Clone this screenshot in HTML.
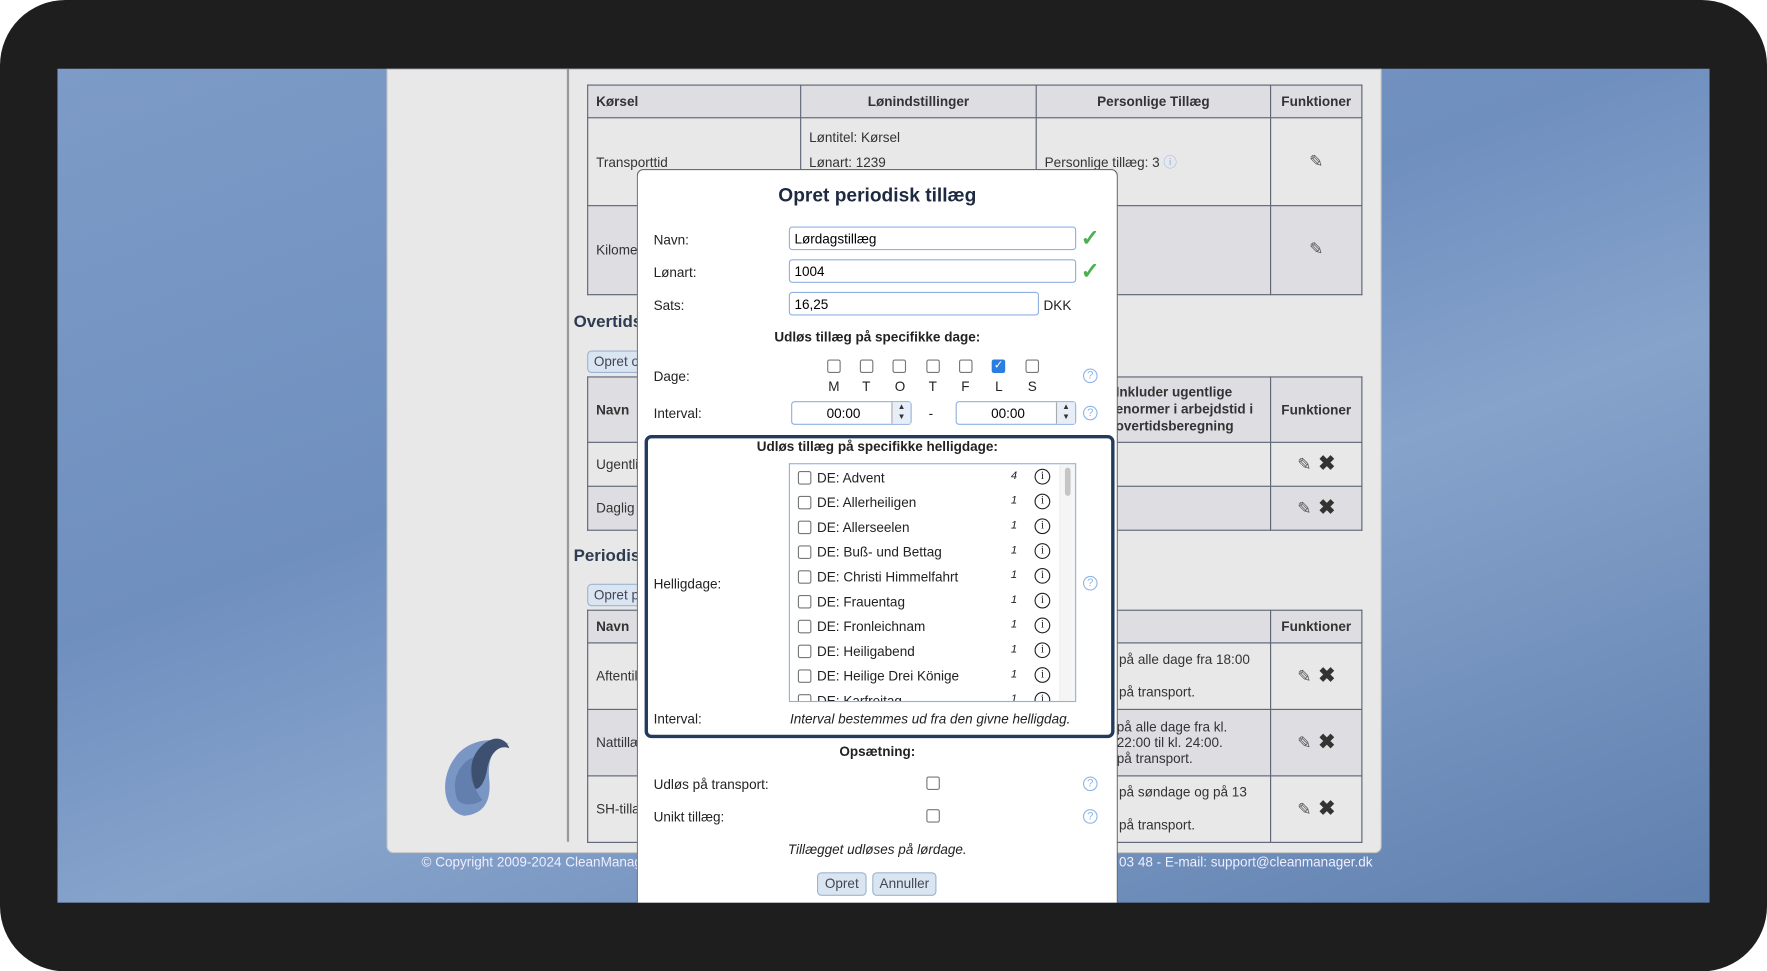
<!DOCTYPE html>
<html><head><meta charset="utf-8"><style>
*{box-sizing:border-box;margin:0;padding:0}
html,body{width:1767px;height:971px;overflow:hidden;background:#fff;font-family:"Liberation Sans",sans-serif}
#w{position:absolute;left:0;top:0;width:1568px;height:862px;transform:scale(1.12692);transform-origin:0 0}
.a{position:absolute}
#frame{left:0;top:0;width:1568px;height:862px;background:#1e1e1e;border-radius:58px}
#desk{left:51px;top:61px;width:1466px;height:740px;background:linear-gradient(160deg,#7d9bc6 0%,#6f8fbf 40%,#86a3cb 60%,#5f7fae 100%)}
#page{left:343px;top:61px;width:883px;height:696px;background:#e8e8e8;border-radius:0 0 6px 6px;border:1px solid #c8c8c8}
#vline{left:503px;top:61px;width:2px;height:686px;background:#999}
table{border-collapse:collapse;position:absolute;font-size:12px;color:#333;table-layout:fixed}
td,th{border:1px solid #5a6274;padding:0 7px;line-height:14px;overflow:hidden}
th{background:#dedee2;font-weight:bold}
td{background:#e8e8e8}
tr.alt td{background:#dedee2}
h3{position:absolute;font-size:15px;color:#2e3b50;font-weight:bold}
.btn{position:absolute;height:20px;border:1px solid #9eb4d2;background:#dae5f2;border-radius:4px;font-size:12px;color:#445;padding:2px 5px;overflow:hidden;white-space:nowrap}
.f{font-size:12px;color:#eef;position:absolute;top:758px}
#modal{left:565px;top:150px;width:427px;height:651px;background:#fff;border-radius:6px 6px 0 0;border:1px solid #666;border-bottom:none}
.m{position:absolute;font-size:12px;color:#222}
.in{position:absolute;height:21px;border:1px solid #8fb0e0;border-radius:3px;font-size:12px;padding:3px 4px;background:#fff}
.chk{position:absolute;width:12px;height:12px;border:1px solid #777;border-radius:2px;background:#fff}
.q{position:absolute;width:13px;height:13px;border:1.3px solid #8fb5e8;border-radius:50%;color:#8fb5e8;font-size:10px;text-align:center;line-height:11px}
.ok{position:absolute;color:#4caf50;font-size:20px;font-weight:bold}
.ii{position:absolute;width:14px;height:14px;border:1.3px solid #222;border-radius:50%;font-size:10px;text-align:center;line-height:12px;font-family:"Liberation Serif",serif;color:#222}
.hl{position:absolute;left:0;font-size:12px;color:#222;height:22px;width:255px}
.pen{display:inline-block;font-size:15px;color:#555}
.x{display:inline-block;font-size:18px;font-weight:bold;color:#333;margin-left:6px}
</style></head><body><div id="w">
<div id="frame" class="a"></div>
<div id="desk" class="a"></div>
<div id="page" class="a"></div>
<div id="vline" class="a"></div>
<svg class="a" style="left:392px;top:650px" width="62" height="74" viewBox="0 0 62 74">
<path d="M20 74 C0 70 -2 40 12 22 C20 10 40 2 60 10 C50 8 40 20 42 40 C44 58 40 72 20 74Z" fill="#7a96c4"/>
<path d="M30 50 C20 35 28 12 45 6 C52 4 58 8 60 14 C50 10 42 20 40 34 C38 44 34 50 30 50Z" fill="#3d5070"/>
<path d="M14 60 C8 44 14 28 28 22 C24 36 28 50 36 60 C30 64 20 66 14 60Z" fill="#5c79a8" opacity=".8"/>
</svg>

<table style="left:521px;top:75px;width:688px">
<tr style="height:29px"><th style="width:189px;text-align:left">Kørsel</th><th style="width:209px">Lønindstillinger</th><th style="width:208px">Personlige Tillæg</th><th>Funktioner</th></tr>
<tr style="height:78px"><td>Transporttid</td><td style="line-height:22px;vertical-align:top;padding-top:6px">Løntitel: Kørsel<br>Lønart: 1239</td><td>Personlige tillæg: 3 <span style="color:#8fb5e8">ⓘ</span></td><td style="text-align:center"><span class="pen">✎</span></td></tr>
<tr class="alt" style="height:79px"><td>Kilometer</td><td></td><td><i>Ikke pålagt</i></td><td style="text-align:center"><span class="pen">✎</span></td></tr>
</table>
<h3 style="left:509px;top:277px">Overtidsregler</h3>
<div class="btn" style="left:521px;top:311px;width:60px">Opret overtid</div>
<table style="left:521px;top:334px;width:688px">
<tr style="height:58px"><th style="width:465px;text-align:left">Navn</th><th style="width:141px;text-align:left;line-height:15px;padding-left:3px">Inkluder ugentlige<br>enormer i arbejdstid i<br>overtidsberegning</th><th>Funktioner</th></tr>
<tr style="height:39px"><td>Ugentlig</td><td></td><td style="text-align:center"><span class="pen">✎</span><span class="x">✖</span></td></tr>
<tr class="alt" style="height:39px"><td>Daglig</td><td></td><td style="text-align:center"><span class="pen">✎</span><span class="x">✖</span></td></tr>
</table>
<h3 style="left:509px;top:485px">Periodiske tillæg</h3>
<div class="btn" style="left:521px;top:518px;width:60px">Opret periodisk</div>
<table style="left:521px;top:541px;width:688px">
<tr style="height:29px"><th style="width:465px;text-align:left">Navn</th><th style="width:141px"></th><th>Funktioner</th></tr>
<tr style="height:59px"><td>Aftentillæg</td><td style="line-height:29px;padding-left:6px">på alle dage fra 18:00<br>på transport.</td><td style="text-align:center"><span class="pen">✎</span><span class="x">✖</span></td></tr>
<tr class="alt" style="height:59px"><td>Nattillæg</td><td style="line-height:14px;padding-left:4px">på alle dage fra kl.<br>22:00 til kl. 24:00.<br>på transport.</td><td style="text-align:center"><span class="pen">✎</span><span class="x">✖</span></td></tr>
<tr style="height:59px"><td>SH-tillæg</td><td style="line-height:29px;padding-left:6px">på søndage og på 13<br>på transport.</td><td style="text-align:center"><span class="pen">✎</span><span class="x">✖</span></td></tr>
</table>
<div class="f" style="left:374px">© Copyright 2009-2024 CleanManager ApS</div>
<div class="f" style="left:993px">03 48 - E-mail: support@cleanmanager.dk</div>

<div id="modal" class="a"></div>
<div class="m" style="left:565px;width:427px;top:164px;text-align:center;font-size:17px;font-weight:bold;color:#1d2a40">Opret periodisk tillæg</div>
<div class="m" style="left:580px;top:206px">Navn:</div>
<div class="in" style="left:700px;top:201px;width:255px">Lørdagstillæg</div><div class="ok" style="left:959px;top:199px">✓</div>
<div class="m" style="left:580px;top:235px">Lønart:</div>
<div class="in" style="left:700px;top:230px;width:255px">1004</div><div class="ok" style="left:959px;top:228px">✓</div>
<div class="m" style="left:580px;top:264px">Sats:</div>
<div class="in" style="left:700px;top:259px;width:222px">16,25</div><div class="m" style="left:926px;top:264px">DKK</div>
<div class="m" style="left:565px;width:427px;text-align:center;top:292px;font-weight:bold">Udløs tillæg på specifikke dage:</div>
<div class="m" style="left:580px;top:327px">Dage:</div>
<div class="chk" style="left:734px;top:319px"></div><div class="chk" style="left:763px;top:319px"></div><div class="chk" style="left:792px;top:319px"></div><div class="chk" style="left:822px;top:319px"></div><div class="chk" style="left:851px;top:319px"></div>
<div class="chk" style="left:880px;top:319px;background:#2a7de1;border-color:#2a7de1;color:#fff;font-size:10px;line-height:10px;text-align:center">✓</div><div class="chk" style="left:910px;top:319px"></div>
<div class="m" style="left:735px;top:336px">M</div><div class="m" style="left:765px;top:336px">T</div><div class="m" style="left:794px;top:336px">O</div><div class="m" style="left:824px;top:336px">T</div><div class="m" style="left:853px;top:336px">F</div><div class="m" style="left:883px;top:336px">L</div><div class="m" style="left:912px;top:336px">S</div>
<div class="q" style="left:961px;top:327px">?</div>
<div class="m" style="left:580px;top:360px">Interval:</div>
<div class="in" style="left:702px;top:356px;width:107px;text-align:center;padding-right:18px">00:00</div>
<div class="a" style="left:791px;top:357px;width:17px;height:19px;border-left:1px solid #aaa;background:#e8eef8;font-size:7px;text-align:center;line-height:9px;color:#333">▲<br>▼</div>
<div class="m" style="left:824px;top:360px">-</div>
<div class="in" style="left:848px;top:356px;width:107px;text-align:center;padding-right:18px">00:00</div>
<div class="a" style="left:937px;top:357px;width:17px;height:19px;border-left:1px solid #aaa;background:#e8eef8;font-size:7px;text-align:center;line-height:9px;color:#333">▲<br>▼</div>
<div class="q" style="left:961px;top:360px">?</div>

<div class="a" style="left:572px;top:386px;width:417px;height:269px;border:3px solid #223a5c;border-radius:6px"></div>
<div class="m" style="left:565px;width:427px;text-align:center;top:389px;font-weight:bold">Udløs tillæg på specifikke helligdage:</div>
<div class="m" style="left:580px;top:511px">Helligdage:</div>
<div class="q" style="left:961px;top:511px">?</div>
<div class="a" style="left:700px;top:411px;width:255px;height:212px;border:1px solid #8fb0e0;overflow:hidden;background:#fff">
<div class="a" style="right:0;top:0;width:14px;height:212px;background:#f5f5f5;border-left:1px solid #eee"></div>
<div class="a" style="right:4px;top:3px;width:5px;height:25px;background:#c5c5c5;border-radius:3px"></div>
<div class="a" style="left:0;top:1px">
<div class="hl" style="top:0"><span class="chk" style="left:7px;top:5px"></span><span class="a" style="left:24px;top:4px">DE: Advent</span><i class="a" style="left:196px;top:4px;font-size:10px">4</i><span class="ii" style="left:217px;top:3px">i</span></div>
<div class="hl" style="top:22px"><span class="chk" style="left:7px;top:5px"></span><span class="a" style="left:24px;top:4px">DE: Allerheiligen</span><i class="a" style="left:196px;top:4px;font-size:10px">1</i><span class="ii" style="left:217px;top:3px">i</span></div>
<div class="hl" style="top:44px"><span class="chk" style="left:7px;top:5px"></span><span class="a" style="left:24px;top:4px">DE: Allerseelen</span><i class="a" style="left:196px;top:4px;font-size:10px">1</i><span class="ii" style="left:217px;top:3px">i</span></div>
<div class="hl" style="top:66px"><span class="chk" style="left:7px;top:5px"></span><span class="a" style="left:24px;top:4px">DE: Buß- und Bettag</span><i class="a" style="left:196px;top:4px;font-size:10px">1</i><span class="ii" style="left:217px;top:3px">i</span></div>
<div class="hl" style="top:88px"><span class="chk" style="left:7px;top:5px"></span><span class="a" style="left:24px;top:4px">DE: Christi Himmelfahrt</span><i class="a" style="left:196px;top:4px;font-size:10px">1</i><span class="ii" style="left:217px;top:3px">i</span></div>
<div class="hl" style="top:110px"><span class="chk" style="left:7px;top:5px"></span><span class="a" style="left:24px;top:4px">DE: Frauentag</span><i class="a" style="left:196px;top:4px;font-size:10px">1</i><span class="ii" style="left:217px;top:3px">i</span></div>
<div class="hl" style="top:132px"><span class="chk" style="left:7px;top:5px"></span><span class="a" style="left:24px;top:4px">DE: Fronleichnam</span><i class="a" style="left:196px;top:4px;font-size:10px">1</i><span class="ii" style="left:217px;top:3px">i</span></div>
<div class="hl" style="top:154px"><span class="chk" style="left:7px;top:5px"></span><span class="a" style="left:24px;top:4px">DE: Heiligabend</span><i class="a" style="left:196px;top:4px;font-size:10px">1</i><span class="ii" style="left:217px;top:3px">i</span></div>
<div class="hl" style="top:176px"><span class="chk" style="left:7px;top:5px"></span><span class="a" style="left:24px;top:4px">DE: Heilige Drei Könige</span><i class="a" style="left:196px;top:4px;font-size:10px">1</i><span class="ii" style="left:217px;top:3px">i</span></div>
<div class="hl" style="top:198px"><span class="chk" style="left:7px;top:5px"></span><span class="a" style="left:24px;top:4px">DE: Karfreitag</span><i class="a" style="left:196px;top:4px;font-size:10px">1</i><span class="ii" style="left:217px;top:3px">i</span></div>
</div></div>
<div class="m" style="left:580px;top:631px">Interval:</div>
<div class="m" style="left:701px;top:631px;font-style:italic">Interval bestemmes ud fra den givne helligdag.</div>

<div class="m" style="left:565px;width:427px;text-align:center;top:660px;font-weight:bold">Opsætning:</div>
<div class="m" style="left:580px;top:689px">Udløs på transport:</div>
<div class="chk" style="left:822px;top:689px"></div><div class="q" style="left:961px;top:689px">?</div>
<div class="m" style="left:580px;top:718px">Unikt tillæg:</div>
<div class="chk" style="left:822px;top:718px"></div><div class="q" style="left:961px;top:718px">?</div>
<div class="m" style="left:565px;width:427px;text-align:center;top:747px;font-style:italic">Tillægget udløses på lørdage.</div>
<div class="btn" style="left:725px;top:774px;height:21px;width:44px;text-align:center">Opret</div>
<div class="btn" style="left:774px;top:774px;height:21px;width:57px;text-align:center">Annuller</div>
</div></body></html>
